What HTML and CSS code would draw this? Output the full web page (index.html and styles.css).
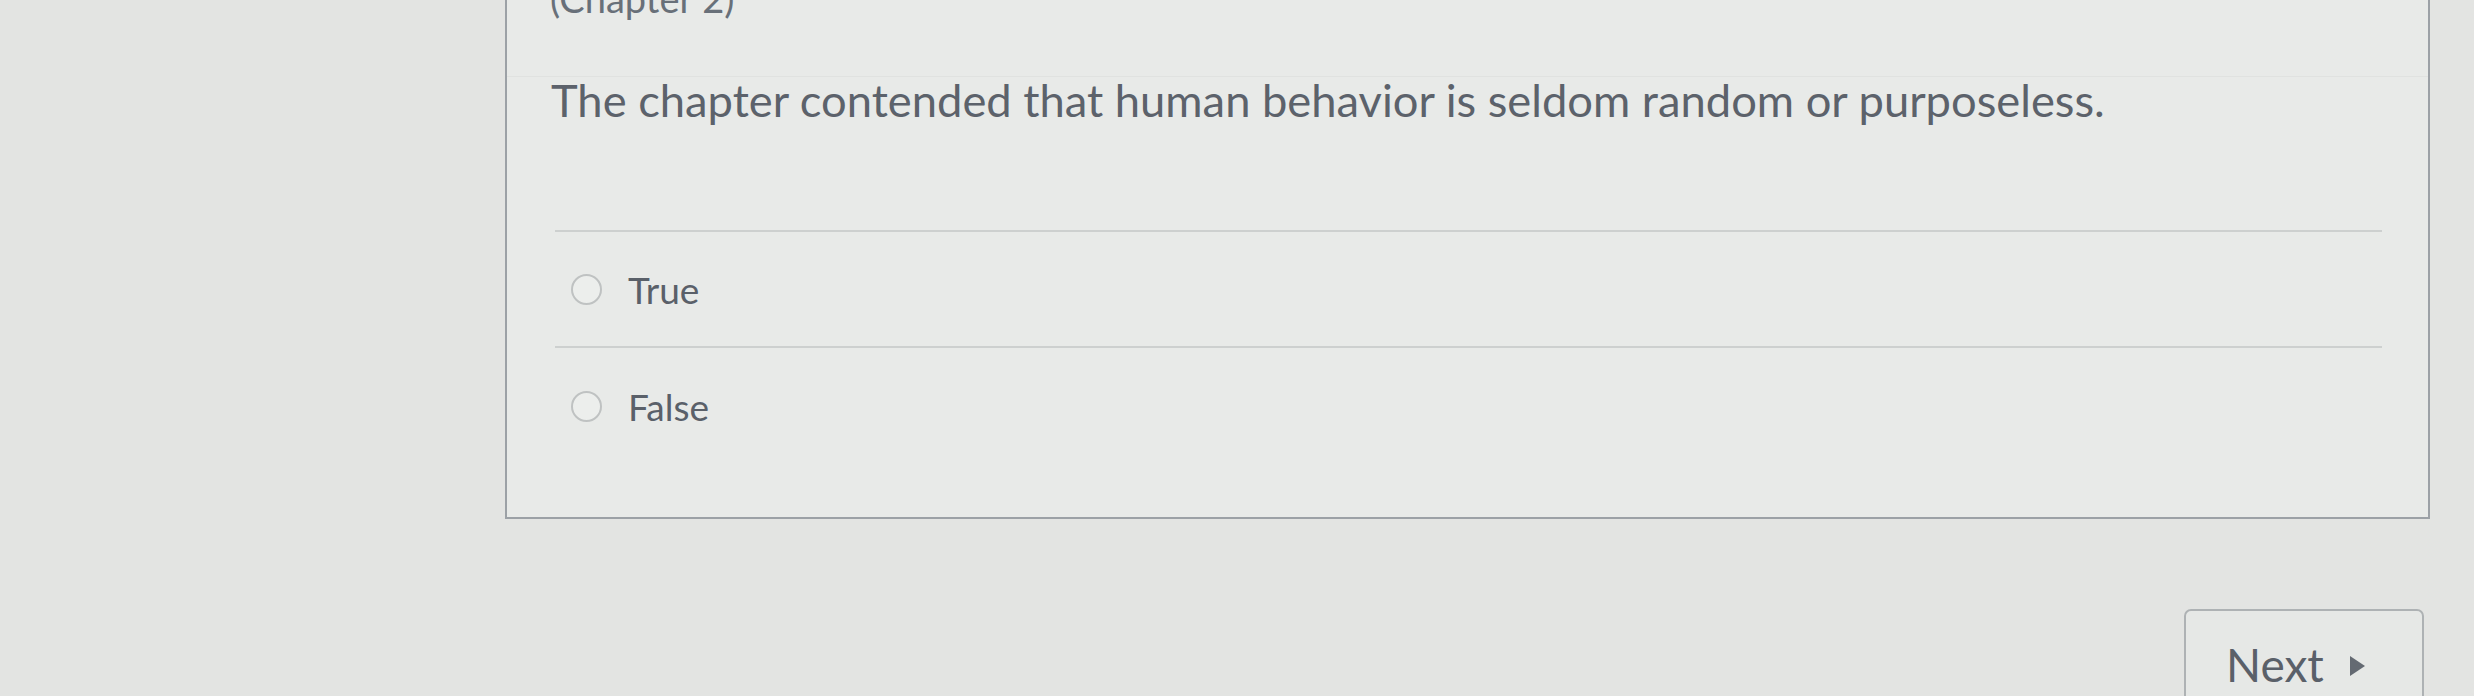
FILE: index.html
```html
<!DOCTYPE html>
<html lang="en">
<head>
<meta charset="utf-8">
<title>Quiz question</title>
<link rel="stylesheet" href="styles.css">
</head>
<body>
<main class="page">
  <section class="question">
    <header class="question-header">(Chapter 2)</header>
    <div class="question-body">
      <div class="question-stem">
        <p class="question-text">The chapter contended that human behavior is seldom random or purposeless.</p>
      </div>
      <div class="answers">
        <label class="answer">
          <span class="radio"></span>
          <span class="answer-label">True</span>
        </label>
        <label class="answer">
          <span class="radio"></span>
          <span class="answer-label">False</span>
        </label>
      </div>
    </div>
  </section>
  <nav class="quiz-nav">
    <button class="next-btn" type="button">Next <span class="caret"></span></button>
  </nav>
</main>
</body>
</html>
```
FILE: styles.css
```css
html, body {
  margin: 0;
  padding: 0;
  height: 100%;
  overflow: hidden;
}

body {
  background: #e3e4e2;
  font-family: Lato, "Open Sans", "Liberation Sans", sans-serif;
  color: #5c626b;
}

.page {
  padding-left: 505px;
  padding-right: 44px;
}

/* question card; its top edge sits above the visible area */
.question {
  margin-top: -27px;
  border: 2px solid #9ca1a6;
  border-top: none;
  background: #e8eae8;
  height: 546px;
  box-sizing: border-box;
}

.question-header {
  font-size: 38px;
  line-height: 50px;
  height: 104px;
  box-sizing: border-box;
  padding-left: 43px;
  color: #687079;
  border-bottom: 1px solid #e0e2e0;
}

.question-body {
  padding: 0 46px 0 48px;
}

.question-stem {
  height: 155px;
  box-sizing: border-box;
  border-bottom: 2px solid #cdd0cf;
}

.question-text {
  margin: 0 0 0 -4px;
  font-size: 45.3px;
  line-height: 46px;
}

.answers {
  display: flex;
  flex-direction: column;
}

.answer {
  display: flex;
  align-items: center;
  gap: 26px;
  height: 116px;
  padding-left: 16px;
  border-bottom: 2px solid #cdd0cf;
  box-sizing: border-box;
}

.answer:last-child {
  border-bottom: none;
}

.radio {
  width: 27px;
  height: 27px;
  border: 2px solid #bfc2c2;
  border-radius: 50%;
  background: #eceeec;
  flex: none;
}

.answer-label {
  font-size: 37px;
  color: #5a6069;
}

.quiz-nav {
  display: flex;
  justify-content: flex-end;
  padding-top: 90px;
  padding-right: 6px;
}

.next-btn {
  width: 240px;
  height: 110px;
  border: 2px solid #aeb2b4;
  border-radius: 7px;
  background: #e6e8e6;
  font-family: inherit;
  font-size: 46px;
  line-height: 55px;
  color: #5a6069;
  display: flex;
  align-items: flex-start;
  justify-content: flex-start;
  gap: 26px;
  padding: 26px 0 0 40px;
  box-sizing: border-box;
}

.caret {
  width: 0;
  height: 0;
  border-top: 10px solid transparent;
  border-bottom: 10px solid transparent;
  border-left: 15px solid #646a72;
  margin-top: 19px;
}
```
